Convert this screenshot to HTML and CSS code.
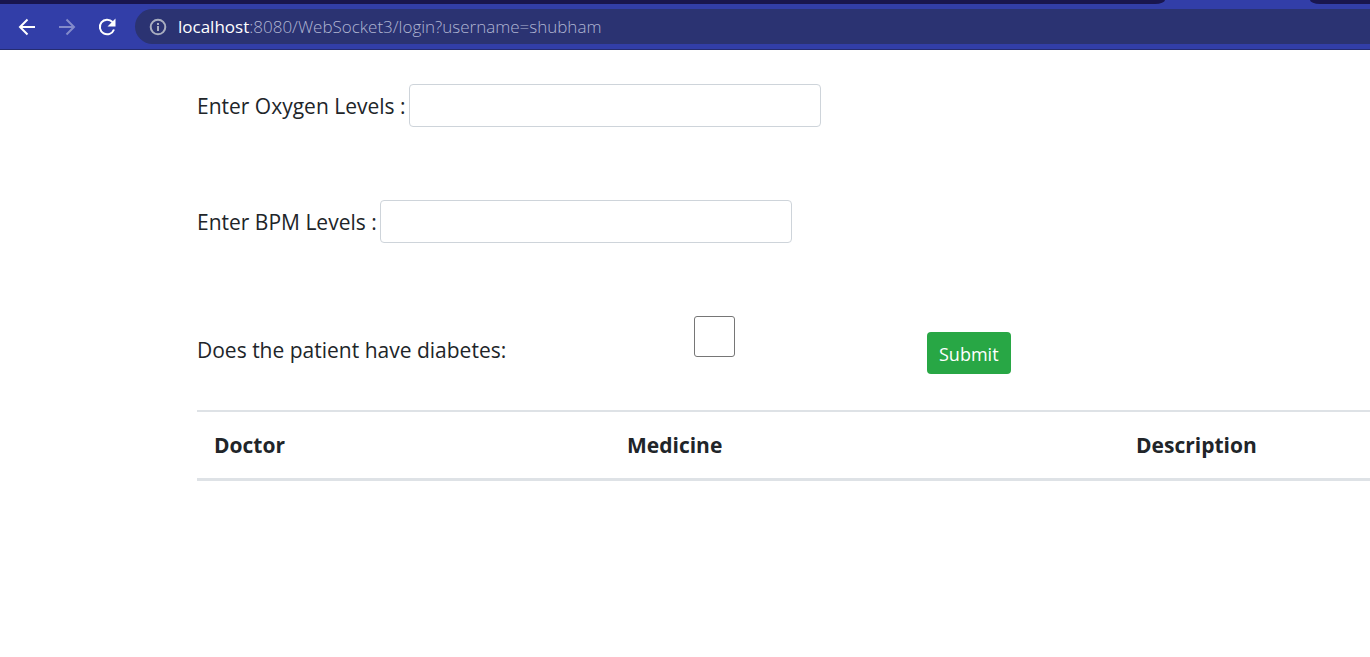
FILE: index.html
```html
<!DOCTYPE html>
<html lang="en">
<head>
<meta charset="utf-8">
<title>Patient levels</title>
<link rel="stylesheet" href="styles.css">
</head>
<body>
<header class="browser">
  <div class="tabs"><span class="tab-left"></span><span class="tab-right"></span></div>
  <div class="toolbar">
    <button class="nav" type="button" aria-label="Back"><svg viewBox="0 0 20 20"><path d="M18 10H3M10.5 2.5L3 10l7.500 7.500"/></svg></button>
    <button class="nav nav-off" type="button" aria-label="Forward"><svg viewBox="0 0 20 20"><path d="M2 10h15M9.500 2.500L17 10l-7.500 7.500"/></svg></button>
    <button class="nav" type="button" aria-label="Reload"><svg viewBox="0 0 20 20"><path d="M15.500 5A7.300 7.300 0 1 0 17 12.500"/><path class="solid" d="M18.500 1.500v8h-8z"/></svg></button>
    <div class="address">
      <svg class="info" viewBox="0 0 18 18"><circle cx="9" cy="9" r="7.300"/><path d="M9 8v5M9 5v2"/></svg>
      <span class="url"><span class="host">localhost</span>:8080/WebSocket3/login?username=shubham</span>
    </div>
  </div>
</header>
<main class="page">
  <form class="form">
    <div class="row">
      <label for="oxygen">Enter Oxygen Levels :</label>
      <input class="field" id="oxygen" type="text">
    </div>
    <div class="row">
      <label for="bpm">Enter BPM Levels :</label>
      <input class="field" id="bpm" type="text">
    </div>
    <div class="row-check">
      <label class="question" for="diabetes">Does the patient have diabetes:</label>
      <input class="check" id="diabetes" type="checkbox">
      <button class="submit" type="submit">Submit</button>
    </div>
  </form>
  <table class="table">
    <thead>
      <tr><th class="doctor" scope="col">Doctor</th><th class="medicine" scope="col">Medicine</th><th scope="col">Description</th></tr>
    </thead>
  </table>
</main>
</body>
</html>
```

FILE: styles.css
```css
* { box-sizing: border-box; }
body {
  margin: 0;
  background: #fff;
  color: #212529;
  font: 21px/32px "Segoe UI", "Open Sans", sans-serif;
}
.browser {
  background: #323ea8;
  border-bottom: 1px solid #252c70;
}
.tabs {
  display: flex;
  justify-content: space-between;
  height: 4px;
}
.tab-left, .tab-right { background: #19164f; }
.tab-left { width: 85%; border-bottom-right-radius: 10px 4px; }
.tab-right { width: 60px; border-bottom-left-radius: 10px 4px; }
.toolbar {
  display: flex;
  align-items: center;
  height: 45px;
  padding-left: 15px;
}
.nav {
  width: 24px;
  height: 24px;
  margin-right: 16px;
  padding: 2px;
  border: 0;
  background: none;
  color: #fff;
}
.nav-off { color: #838bcb; }
.nav svg {
  display: block;
  width: 20px;
  height: 20px;
  fill: none;
  stroke: currentColor;
  stroke-width: 2;
}
.nav .solid { fill: currentColor; stroke: none; }
.address {
  display: flex;
  flex: 1;
  align-items: center;
  gap: 11px;
  height: 35px;
  padding-left: 14px;
  border-radius: 18px 0 0 18px;
  background: #2b3372;
}
.info {
  width: 18px;
  height: 18px;
  fill: none;
  stroke: #a9aec0;
  stroke-width: 2;
}
.url {
  color: #b0b5d2;
  font-size: 17px;
  font-weight: 300;
  line-height: 24px;
}
.host { color: #fff; font-weight: 400; }
.page {
  padding: 34px 0 0 197px;
  overflow-x: hidden;
}
.row {
  display: flex;
  align-items: center;
  gap: 3px;
  margin-bottom: 73px;
}
.field {
  width: 412px;
  height: 43px;
  padding: 6px 12px;
  border: 1px solid #ced4da;
  border-radius: 4px;
  background: #fff;
  font: inherit;
}
.row-check {
  display: flex;
  align-items: flex-start;
  height: 94px;
}
.question {
  width: 497px;
  padding-top: 18px;
}
.check {
  appearance: none;
  width: 41px;
  height: 41px;
  margin: 0 192px 0 0;
  border: 1px solid #767676;
  border-radius: 3px;
  background: #fff;
}
.submit {
  height: 42px;
  margin-top: 16px;
  padding: 0 12px;
  border: 0;
  border-radius: 4px;
  background: #28a745;
  color: #fff;
  font: 18px/44px "Segoe UI", "Open Sans", sans-serif;
}
.table {
  width: 130%;
  border-collapse: separate;
  border-spacing: 0;
  table-layout: fixed;
}
.table th {
  padding: 17px;
  border-top: 2px solid #dee2e6;
  border-bottom: 3px solid #dee2e6;
  font-weight: 700;
  text-align: left;
}
.doctor { width: 413px; }
.medicine { width: 509px; }
```
